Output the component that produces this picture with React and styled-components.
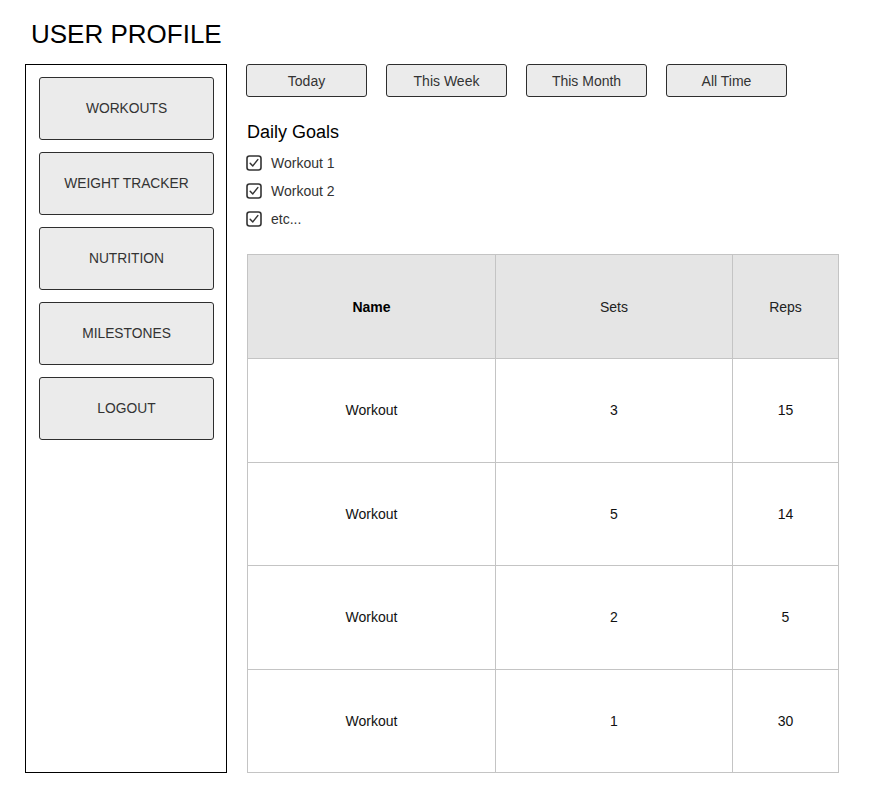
import React from 'react';
import styled, {createGlobalStyle} from 'styled-components';

const GlobalStyle = createGlobalStyle`
  body {
    margin: 0;
    background: #fff;
    font-family: 'Liberation Sans', Arial, sans-serif;
    color: #000;
  }
`

const navItems = ['Workouts', 'Weight Tracker', 'Nutrition', 'Milestones', 'Logout'];
const ranges = ['Today', 'This Week', 'This Month', 'All Time'];
const goals = ['Workout 1', 'Workout 2', 'etc...'];
const workouts = [
  {name: 'Workout', sets: 3, reps: 15},
  {name: 'Workout', sets: 5, reps: 14},
  {name: 'Workout', sets: 2, reps: 5},
  {name: 'Workout', sets: 1, reps: 30},
];

const CheckIcon = () => (
  <svg width='16' height='16' viewBox='0 0 16 16'>
    <rect x='1' y='1' width='14' height='14' rx='2.5' fill='none' stroke='#333' strokeWidth='1.6' />
    <path d='M4.2 8.2 L6.8 10.9 L11.8 4.6' fill='none' stroke='#333' strokeWidth='1.5' strokeLinecap='round' strokeLinejoin='round' />
  </svg>
)

export default function App() {
  return (
    <Page>
      <GlobalStyle />
      <Title>USER PROFILE</Title>
      <Layout>
        <Sidebar>
          {navItems.map(item => (
            <NavButton key={item}>{item}</NavButton>
          ))}
        </Sidebar>
        <Main>
          <RangeBar>
            {ranges.map(r => (
              <RangeButton key={r}>{r}</RangeButton>
            ))}
          </RangeBar>
          <GoalsHeading>Daily Goals</GoalsHeading>
          <GoalList>
            {goals.map(g => (
              <Goal key={g}>
                <CheckIcon />
                <span>{g}</span>
              </Goal>
            ))}
          </GoalList>
          <Table>
            <colgroup>
              <col style={{width: 248}} />
              <col style={{width: 237}} />
              <col style={{width: 106}} />
            </colgroup>
            <thead>
              <tr>
                <Th bold>Name</Th>
                <Th>Sets</Th>
                <Th>Reps</Th>
              </tr>
            </thead>
            <tbody>
              {workouts.map((w, i) => (
                <tr key={i}>
                  <Td>{w.name}</Td>
                  <Td>{w.sets}</Td>
                  <Td>{w.reps}</Td>
                </tr>
              ))}
            </tbody>
          </Table>
        </Main>
      </Layout>
    </Page>
  );
}

const Page = styled.div`
  padding: 18px 25px 0;
  width: 870px;
  box-sizing: border-box;
`

const Title = styled.h1`
  margin: 0 0 14px 6px;
  font-size: 26px;
  font-weight: normal;
  line-height: 32px;
`

const Layout = styled.div`
  display: flex;
  align-items: stretch;
  gap: 19px;
`

const Sidebar = styled.nav`
  width: 202px;
  box-sizing: border-box;
  border: 1px solid #000;
  padding: 12px 12px 0 13px;
  display: flex;
  flex-direction: column;
  gap: 12px;
`

const NavButton = styled.button`
  width: 175px;
  height: 63px;
  background: #ebebeb;
  border: 1px solid #2e2e2e;
  border-radius: 3px;
  color: #333;
  font-family: 'Liberation Sans', Arial, sans-serif;
  font-size: 13.8px;
  text-transform: uppercase;
  padding: 0;
`

const Main = styled.main`
  display: flex;
  flex-direction: column;
  width: 593px;
`

const RangeBar = styled.div`
  display: flex;
  gap: 19px;
`

const RangeButton = styled.button`
  width: 121px;
  height: 33px;
  background: #ebebeb;
  border: 1px solid #2e2e2e;
  border-radius: 3px;
  color: #333;
  font-family: 'Liberation Sans', Arial, sans-serif;
  font-size: 14px;
  padding: 0;
`

const GoalsHeading = styled.h2`
  margin: 25px 0 6px 1px;
  font-size: 18px;
  font-weight: normal;
  line-height: 21px;
`

const GoalList = styled.ul`
  list-style: none;
  margin: 0 0 21px;
  padding: 0;
`

const Goal = styled.li`
  display: flex;
  align-items: center;
  gap: 9px;
  height: 28px;
  font-size: 14px;
  color: #333;
  svg {
    flex: none;
    margin-top: -1px;
  }
`

const Table = styled.table`
  margin-left: 1px;
  width: 591px;
  border-collapse: collapse;
  table-layout: fixed;
  font-size: 14px;
`

const Th = styled.th`
  height: 103px;
  background: #e5e5e5;
  border: 1px solid #c4c4c4;
  font-weight: ${p => (p.bold ? 'bold' : 'normal')};
  color: ${p => (p.bold ? '#000' : '#222')};
  text-align: center;
  padding: 0;
`

const Td = styled.td`
  height: 102.5px;
  border: 1px solid #c4c4c4;
  text-align: center;
  padding: 0;
  color: #111;
`
